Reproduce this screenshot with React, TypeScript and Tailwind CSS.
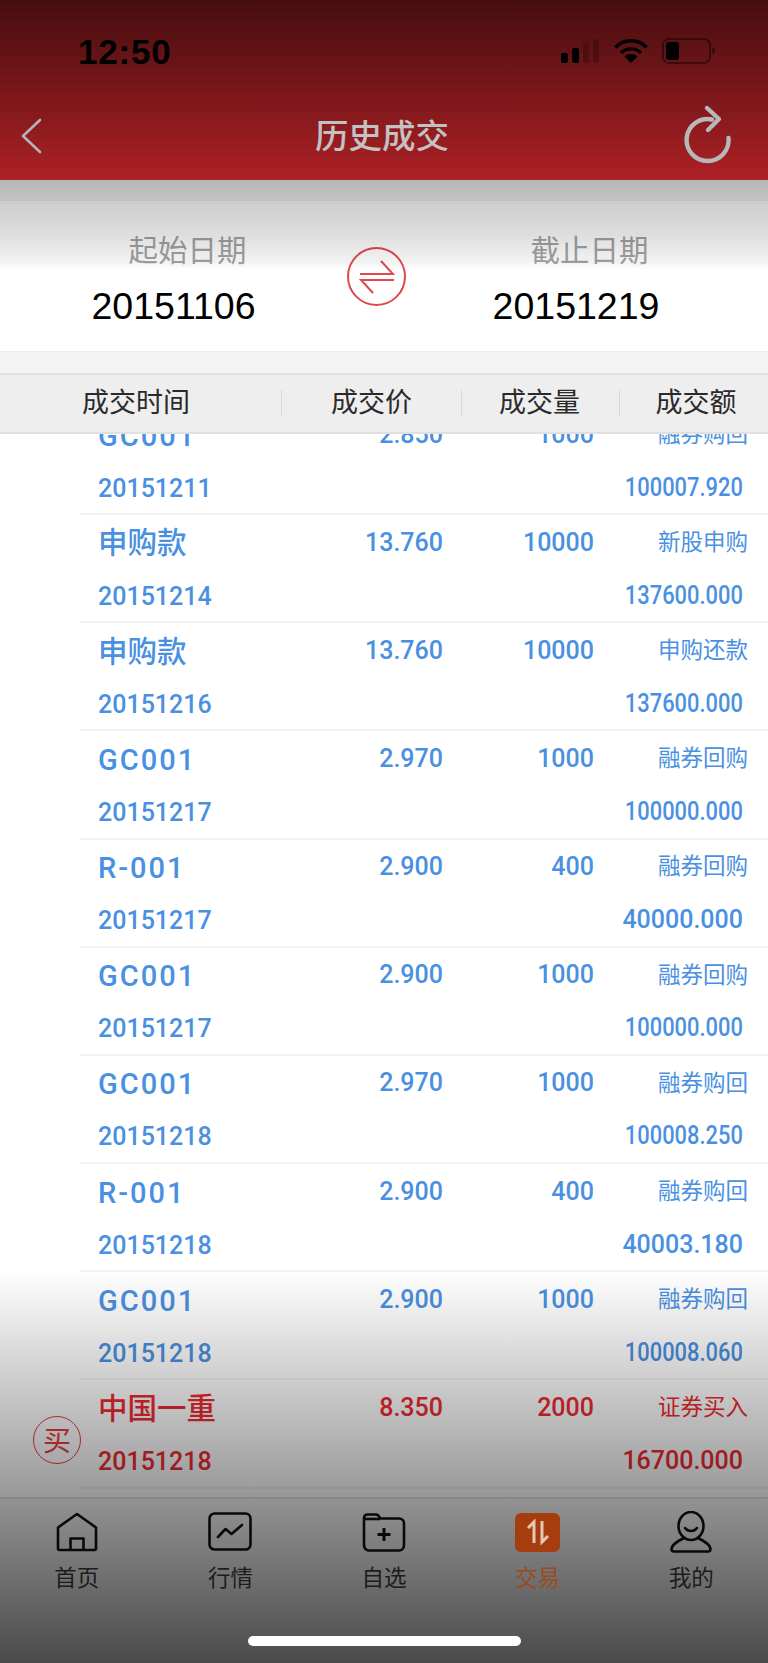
import React from "react";

type Row = { name: string; price: string; qty: string; type: string; date: string; amount: string; red?: boolean };

const rows: Row[] = [
  { name: "GC001", price: "2.850", qty: "1000", type: "融券购回", date: "20151211", amount: "100007.920" },
  { name: "申购款", price: "13.760", qty: "10000", type: "新股申购", date: "20151214", amount: "137600.000" },
  { name: "申购款", price: "13.760", qty: "10000", type: "申购还款", date: "20151216", amount: "137600.000" },
  { name: "GC001", price: "2.970", qty: "1000", type: "融券回购", date: "20151217", amount: "100000.000" },
  { name: "R-001", price: "2.900", qty: "400", type: "融券回购", date: "20151217", amount: "40000.000" },
  { name: "GC001", price: "2.900", qty: "1000", type: "融券回购", date: "20151217", amount: "100000.000" },
  { name: "GC001", price: "2.970", qty: "1000", type: "融券购回", date: "20151218", amount: "100008.250" },
  { name: "R-001", price: "2.900", qty: "400", type: "融券购回", date: "20151218", amount: "40003.180" },
  { name: "GC001", price: "2.900", qty: "1000", type: "融券购回", date: "20151218", amount: "100008.060" },
  { name: "中国一重", price: "8.350", qty: "2000", type: "证券买入", date: "20151218", amount: "16700.000", red: true },
];

function TradeRow({ r }: { r: Row }) {
  const latin = /^[A-Z]/.test(r.name);
  return (
    <div
      className={`ml-[80px] h-[108.17px] shrink-0 border-b-2 border-[#f3f3f3] pl-[18px] pr-[20px] [font-family:Roboto,'Noto_Sans_CJK_SC',sans-serif] ${
        r.red ? "text-[#f02a32]" : "text-[#4a90e2]"
      }`}
    >
      <div className="flex h-[54px] items-center">
        <div
          className={`mt-[4px] flex-1 font-medium leading-none ${
            latin ? "text-[29px] tracking-[2px]" : "text-[29.5px]"
          }`}
        >
          {r.name}
        </div>
        <div className="w-[101px] text-right text-[25px] font-medium leading-none">{r.price}</div>
        <div className="w-[151px] text-right text-[25px] font-medium leading-none">{r.qty}</div>
        <div className="w-[154px] text-right text-[22.5px] leading-none">{r.type}</div>
      </div>
      <div className="flex h-[52px] items-center justify-between">
        <div className="mt-[2px] text-[25px] font-medium leading-none">{r.date}</div>
        <div
          className={`mr-[5px] origin-right text-[25px] font-medium leading-none ${
            r.amount.length >= 10 ? "scale-x-[0.875]" : ""
          }`}
        >
          {r.amount}
        </div>
      </div>
    </div>
  );
}

function NavItem({ label, children, active }: { label: string; children: React.ReactNode; active?: boolean }) {
  return (
    <div className="flex flex-1 flex-col items-center">
      <div className={`flex h-[40px] w-[48px] items-center justify-center ${active ? "relative z-20" : ""}`}>{children}</div>
      <div
        className={`relative z-20 mt-[8px] text-[22.5px] leading-[32px] ${active ? "text-[#9c4a22]" : "text-[#1c1c1c]"}`}
      >
        {label}
      </div>
    </div>
  );
}

function Header() {
  return (
    <div className="h-[180px] shrink-0 bg-[#e62c32]">
      <div className="flex h-[90px] items-center justify-between pl-[78px] pr-[52px] pt-[12px]">
        <div className="text-[35px] font-bold leading-none tracking-[0.8px] text-black [font-family:'Liberation_Sans',sans-serif]">
          12:50
        </div>
        <div className="flex items-center">
          <svg width="40" height="26" viewBox="0 0 40 26">
            <rect x="1" y="15" width="7" height="10" rx="2" fill="#000" />
            <rect x="12" y="10" width="7" height="15" rx="2" fill="#000" />
            <rect x="23" y="5" width="6" height="20" rx="2" fill="#000" fillOpacity="0.22" />
            <rect x="33" y="1" width="6" height="24" rx="2" fill="#000" fillOpacity="0.22" />
          </svg>
          <svg className="ml-[14px]" width="34" height="26" viewBox="0 0 34 26" fill="none">
            <path d="M1.5 9.5C9.5 0.5 24.5 0.5 32.5 9.5" stroke="#000" strokeWidth="3.4" />
            <path d="M7 15C12 9.5 22 9.5 27 15" stroke="#000" strokeWidth="3.4" />
            <path d="M17 25L10.5 18.5C14 15.3 20 15.3 23.5 18.5Z" fill="#000" />
          </svg>
          <svg className="ml-[14px]" width="54" height="26" viewBox="0 0 54 26" fill="none">
            <rect x="1" y="1" width="47" height="24" rx="6" stroke="#000" strokeOpacity="0.55" strokeWidth="1.6" />
            <rect x="4" y="4" width="13" height="18" rx="3" fill="#000" />
            <path d="M50.5 9.5C52.5 10.5 53 12 53 13S52.5 15.5 50.5 16.5Z" fill="#000" fillOpacity="0.55" />
          </svg>
        </div>
      </div>
      <div className="relative z-20 grid h-[90px] grid-cols-[1fr_auto_1fr] items-center pl-[20px] pr-[36px]">
        <svg className="mt-[2px]" width="22" height="36" viewBox="0 0 22 36" fill="none">
          <path d="M20 2L3 18L20 34" stroke="#b4b4b4" strokeWidth="2.6" strokeLinecap="round" strokeLinejoin="round" />
        </svg>
        <div className="mb-[2px] ml-[12px] text-[33.5px] font-medium leading-none text-[#c2c2c2] [font-family:'Noto_Sans_CJK_SC',sans-serif]">
          历史成交
        </div>
        <svg className="mb-[2px] justify-self-end" width="48" height="60" viewBox="0 0 48 60" fill="none">
          <path d="M44.5 34A21 21 0 1 1 28 15.5" stroke="#b8b8b8" strokeWidth="4.4" strokeLinecap="round" />
          <path d="M23 4L35 15L24 26" stroke="#b8b8b8" strokeWidth="4.4" strokeLinecap="round" strokeLinejoin="round" />
        </svg>
      </div>
    </div>
  );
}

function DatePanel() {
  return (
    <div className="shrink-0 bg-[#f4f4f4] pb-[21px] pt-[20px]">
      <div className="flex h-[152px] items-start border-y border-[#eeeeee] bg-white">
        <div className="flex w-[347px] flex-col items-center pt-[28px]">
          <div className="ml-[28px] text-[29.5px] leading-[38px] text-[#a3a3a3] [font-family:'Noto_Sans_CJK_SC',sans-serif]">
            起始日期
          </div>
          <div className="mt-[20px] text-[37.5px] leading-[38px] text-black [font-family:'Liberation_Sans',sans-serif]">
            20151106
          </div>
        </div>
        <div className="mt-[46px] flex h-[59px] w-[59px] items-center justify-center rounded-full border-2 border-[#e2474b]">
          <svg width="36" height="36" viewBox="0 0 36 36" fill="none">
            <path d="M1 15H34L22 2" stroke="#e2474b" strokeWidth="2" />
            <path d="M35 21H2L14 34" stroke="#e2474b" strokeWidth="2" />
          </svg>
        </div>
        <div className="flex w-[340px] flex-col items-center pt-[28px]">
          <div className="ml-[27px] text-[29.5px] leading-[38px] text-[#a3a3a3] [font-family:'Noto_Sans_CJK_SC',sans-serif]">
            截止日期
          </div>
          <div className="mt-[20px] text-[37.5px] leading-[38px] text-black [font-family:'Liberation_Sans',sans-serif]">
            20151219
          </div>
        </div>
      </div>
    </div>
  );
}

function TableHead() {
  const cell = "flex h-[27px] items-center justify-center border-r border-[#d9d9d9]";
  const label = "mb-[6px]";
  return (
    <div className="flex h-[61px] shrink-0 items-center border-y-2 border-[#e0e0e0] bg-[#eeeeee] text-[27px] leading-none text-[#2a2a2a] [font-family:'Noto_Sans_CJK_SC',sans-serif]">
      <div className={`${cell} w-[282px] pr-[9px]`}>
        <span className={label}>成交时间</span>
      </div>
      <div className={`${cell} w-[180px]`}>
        <span className={label}>成交价</span>
      </div>
      <div className={`${cell} w-[158px] pr-[2px]`}>
        <span className={label}>成交量</span>
      </div>
      <div className="flex h-[27px] w-[148px] items-center justify-center pl-[4px]">
        <span className={label}>成交额</span>
      </div>
    </div>
  );
}

function BottomNav() {
  return (
    <div className="h-[166px] shrink-0 border-t-2 border-[#e2e2e2] bg-[#f8f8f8] pt-[13px] [font-family:'Noto_Sans_CJK_SC',sans-serif]">
      <div className="flex">
        <NavItem label="首页">
          <svg width="44" height="40" viewBox="0 0 44 40" fill="none" stroke="#111" strokeWidth="2.6" strokeLinejoin="round">
            <path d="M3 36.5V15.5L22 2L41 15.5V36.5C41 37.5 40.5 38 39.5 38H4.5C3.5 38 3 37.5 3 36.5Z" />
            <path d="M15.5 38V26.5H28.5V38" />
          </svg>
        </NavItem>
        <NavItem label="行情">
          <svg width="44" height="40" viewBox="0 0 44 40" fill="none" stroke="#111" strokeWidth="2.6" strokeLinejoin="round" strokeLinecap="round">
            <rect x="1.5" y="1.5" width="41" height="36" rx="5" />
            <path d="M10 25L17.5 17L23.5 22L34 13" />
          </svg>
        </NavItem>
        <NavItem label="自选">
          <svg width="44" height="40" viewBox="0 0 44 40" fill="none" stroke="#111" strokeWidth="2.6" strokeLinejoin="round">
            <path d="M2 33V6C2 4 3.5 2.5 5.5 2.5H14C16 2.5 17 3.5 18 6.5H37C40 6.5 42 8.5 42 11.5V33C42 36 40 38.5 37 38.5H7C4 38.5 2 36 2 33Z" />
            <path d="M3 7H18" />
            <path d="M22 16V29M15.5 22.5H28.5" strokeWidth="3" />
          </svg>
        </NavItem>
        <NavItem label="交易" active>
          <div className="flex h-[39px] w-[45px] items-center justify-center rounded-[6px] bg-[#a63d0e]">
            <svg width="26" height="26" viewBox="0 0 26 26" fill="none" stroke="#e8c6b4" strokeWidth="3">
              <path d="M9 24V3L3 9" />
              <path d="M17 2V23L23 17" />
            </svg>
          </div>
        </NavItem>
        <NavItem label="我的">
          <svg width="44" height="42" viewBox="0 0 44 42" fill="none" stroke="#111" strokeWidth="2.6" strokeLinecap="round">
            <ellipse cx="22" cy="15" rx="12.5" ry="14" />
            <path d="M16 17C19 21 25 21 28 17" />
            <path d="M15 27C9 30 3 33 2.5 38C2.5 40 3.5 40.5 5 40.5H39C40.5 40.5 41.5 40 41.5 38C41 33 35 30 29 27" />
          </svg>
        </NavItem>
      </div>
    </div>
  );
}

export default function App() {
  return (
    <div className="relative flex h-[1663px] w-[768px] flex-col overflow-hidden bg-white">
      <Header />
      <DatePanel />
      <TableHead />
      <div className="min-h-0 flex-1 overflow-hidden">
        <div className="-mt-[27px] flex flex-col">
          {rows.map((r, i) => (
            <TradeRow key={i} r={r} />
          ))}
        </div>
      </div>
      <BottomNav />

      {/* floating buy badge */}
      <div className="absolute left-[33px] top-[1416px] flex h-[48px] w-[48px] items-center justify-center rounded-full border-[1.5px] border-[#f03a42] pb-[3px] text-[28px] leading-none text-[#f03a42] [font-family:'Noto_Sans_CJK_SC',sans-serif]">
        买
      </div>

      {/* dim overlays of the screenshot */}
      <div className="pointer-events-none absolute inset-x-0 top-0 z-10 h-[270px] bg-[linear-gradient(to_bottom,rgba(0,0,0,0.7)_0px,rgba(0,0,0,0.25)_180px,rgba(0,0,0,0.2)_200px,rgba(0,0,0,0.13)_235px,rgba(0,0,0,0.05)_262px,rgba(0,0,0,0)_270px)]" />
      <div className="pointer-events-none absolute inset-x-0 bottom-0 z-10 h-[393px] bg-[linear-gradient(to_bottom,rgba(0,0,0,0),rgba(0,0,0,0.7))]" />

      {/* home indicator */}
      <div className="absolute left-[248px] top-[1636px] z-20 h-[10px] w-[273px] rounded-full bg-white" />
    </div>
  );
}
